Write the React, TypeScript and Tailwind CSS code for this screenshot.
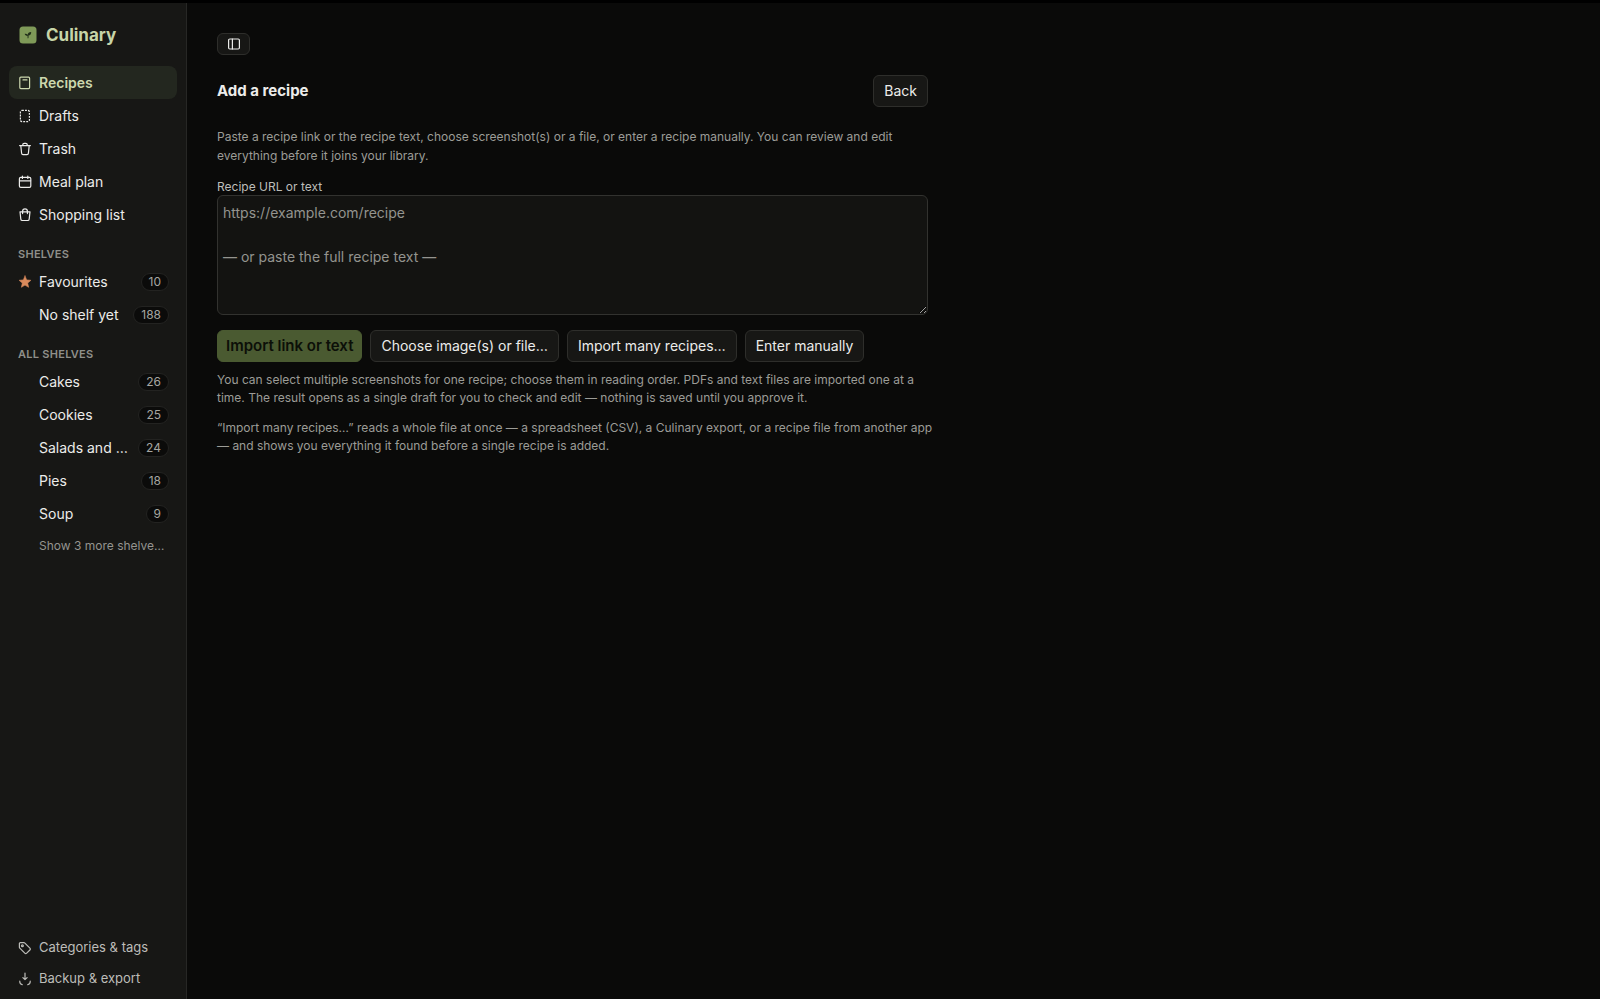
import React from 'react';
import { clsx } from 'clsx';

interface NavItem {
  label: string;
  icon?: React.ReactNode;
  count?: number;
  active?: boolean;
}

const Icon: React.FC<{ children: React.ReactNode; className?: string }> = ({ children, className }) => (
  <svg
    viewBox="0 0 16 16"
    className={clsx('size-4 shrink-0', className)}
    fill="none"
    stroke="currentColor"
    strokeWidth="1.2"
    strokeLinecap="round"
    strokeLinejoin="round"
    aria-hidden="true"
  >
    {children}
  </svg>
);

const libraryItems: NavItem[] = [
  {
    label: 'Recipes',
    active: true,
    icon: (
      <Icon>
        <rect x="2.8" y="2.2" width="9.8" height="11.4" rx="1" />
        <path d="M6 4.9h4" />
      </Icon>
    ),
  },
  {
    label: 'Drafts',
    icon: (
      <Icon>
        <rect x="3.4" y="2.4" width="9" height="11.2" rx="1.6" strokeDasharray="1.9 1.1" strokeLinecap="butt" />
      </Icon>
    ),
  },
  {
    label: 'Trash',
    icon: (
      <Icon>
        <path d="M2.6 4.6h10.8M5.8 4.4v-.8c0-.8.5-1.3 1.3-1.3h1.8c.8 0 1.3.5 1.3 1.3v.8M3.8 4.8l.8 7.5c.1.9.6 1.3 1.4 1.3h4c.8 0 1.3-.4 1.4-1.3l.8-7.5" />
      </Icon>
    ),
  },
  {
    label: 'Meal plan',
    icon: (
      <Icon>
        <rect x="2.4" y="3.4" width="11.4" height="10" rx="1.4" />
        <path d="M2.6 6.8h11M5.4 2v2.400M10.800 2v2.400" />
      </Icon>
    ),
  },
  {
    label: 'Shopping list',
    icon: (
      <Icon>
        <path d="M3 4.800h10l-.8 7.300c-.1.900-.7 1.400-1.500 1.400H5.300c-.8 0-1.400-.5-1.500-1.400L3 4.800ZM5.600 6.600V4.300C5.600 2.900 6.600 1.900 8 1.900s2.400 1 2.400 2.400v2.300" />
      </Icon>
    ),
  },
];

const shelfItems: NavItem[] = [
  {
    label: 'Favourites',
    count: 10,
    icon: (
      <Icon className="text-[#d98a5c]">
        <path
          fill="currentColor"
          strokeWidth=".6"
          d="m8 2 1.700 3.900 4.200.4-3.200 2.800.9 4.200L8 11.100l-3.600 2.200.9-4.200-3.200-2.800 4.200-.4L8 2Z"
        />
      </Icon>
    ),
  },
  { label: 'No shelf yet', count: 188 },
];

const allShelves: NavItem[] = [
  { label: 'Cakes', count: 26 },
  { label: 'Cookies', count: 25 },
  { label: 'Salads and …', count: 24 },
  { label: 'Pies', count: 18 },
  { label: 'Soup', count: 9 },
];

const NavList: React.FC<{ items: NavItem[] }> = ({ items }) => (
  <ul>
    {items.map((item) => (
      <li key={item.label}>
        <a
          href="#"
          aria-current={item.active ? 'page' : undefined}
          className={clsx(
            'flex h-[33px] items-center rounded-lg px-2 text-sm',
            item.active ? 'bg-[#23271f] font-semibold text-[#ccd8ae]' : 'text-[#ececea]',
          )}
        >
          <span className="mr-1.5 flex size-4 shrink-0">{item.icon}</span>
          <span className="flex-1 whitespace-nowrap">{item.label}</span>
          {item.count !== undefined && (
            <span className="rounded-full border border-[#232321] bg-[#0b0b0a] px-[7px] text-xs leading-4 text-[#a6a6a1]">
              {item.count}
            </span>
          )}
        </a>
      </li>
    ))}
  </ul>
);

const ShelfHeading: React.FC<{ children: React.ReactNode }> = ({ children }) => (
  <h2 className="px-[9px] pt-[15px] pb-[3px] text-[11px] leading-4 font-semibold tracking-wide text-[#8f8f8a] uppercase">
    {children}
  </h2>
);

const Sidebar = () => (
  <aside className="flex w-[187px] shrink-0 flex-col border-r border-[#272725] bg-[#171715] px-[9px] pb-[5px]">
    <div className="flex items-center gap-[9px] px-2.5 pt-[18px] pb-[17px]">
      <svg viewBox="0 0 18 18" className="size-[18px]" aria-hidden="true">
        <rect x=".5" y=".5" width="17" height="17" rx="3.5" fill="#7f9a58" />
        <path
          d="M8.500 12.300c.2-1 .2-1.800-.1-2.500C7 9.900 6 9.100 5.700 7.700c1.400-.2 2.400.2 3 1.100.1-1.500 1.200-2.500 3.500-2.700.1 2-.9 3.300-2.700 3.500.2.900.1 1.800-.1 2.700h-.9Z"
          fill="#22301a"
        />
      </svg>
      <span className="text-[17px] leading-7 font-bold text-[#c7d5a8]">Culinary</span>
    </div>

    <nav aria-label="Library">
      <NavList items={libraryItems} />
      <ShelfHeading>Shelves</ShelfHeading>
      <NavList items={shelfItems} />
      <ShelfHeading>All shelves</ShelfHeading>
      <NavList items={allShelves} />
      <button type="button" className="block h-8 pl-[30px] text-xs whitespace-nowrap text-[#94948f]">
        Show 3 more shelve…
      </button>
    </nav>

    <nav aria-label="Manage" className="mt-auto text-[13px] text-[#bdbdb9]">
      <a href="#" className="flex h-[31px] items-center gap-1.5 px-2">
        <Icon>
          <path d="M2.400 3.600v3.600c0 .4.100.7.400 1l5 5c.6.600 1.300.6 1.900 0l3.200-3.200c.6-.6.600-1.300 0-1.900l-5-5c-.3-.3-.6-.4-1-.4H3.300c-.5 0-.9.4-.9.900Z" />
          <circle cx="5.400" cy="5.700" r=".9" />
        </Icon>
        Categories &amp; tags
      </a>
      <a href="#" className="flex h-[31px] items-center gap-1.5 px-2">
        <Icon>
          <path d="M8 2v6.600M5.900 6.600 8 8.700l2.100-2.100M2.800 10.200v.5c0 1.700.8 2.600 2.400 2.900M13.200 10.200v.5c0 1.700-.8 2.600-2.400 2.900" />
        </Icon>
        Backup &amp; export
      </a>
    </nav>
  </aside>
);

interface ButtonProps {
  children: React.ReactNode;
  primary?: boolean;
}

const Button: React.FC<ButtonProps> = ({ children, primary }) => (
  <button
    type="button"
    disabled={primary}
    className={clsx(
      'h-8 rounded-md border whitespace-nowrap',
      primary
        ? 'border-[#4a5a31] bg-[#4a5a31] px-2 text-[15px] font-semibold text-[#0c0f08]'
        : 'border-[#2e2e2b] bg-[#171715] px-2.5 text-sm text-[#ececea]',
    )}
  >
    {children}
  </button>
);

export default function App() {
  return (
    <div className="flex min-h-screen border-t-3 border-black bg-[#0a0a09] font-['Inter','Liberation_Sans',sans-serif]">
      <Sidebar />
      <main className="min-w-0 flex-1 px-[30px] pt-[30px] text-[#ececea]">
        <div className="max-w-[711px]">
          <button
            type="button"
            aria-label="Toggle sidebar"
            className="flex h-[22px] w-[33px] items-center justify-center rounded-md border border-[#2e2e2b] bg-[#171715]"
          >
            <Icon>
              <rect x="2.600" y="3" width="10.800" height="10" rx="1.200" />
              <path d="M6.400 3v10" />
            </Icon>
          </button>

          <div className="mt-5 flex items-center justify-between">
            <h1 className="text-[15px] font-bold">Add a recipe</h1>
            <Button>Back</Button>
          </div>

          <p className="mt-5 text-xs leading-[19px] text-[#9c9c97]">
            Paste a recipe link or the recipe text, choose screenshot(s) or a file, or enter a recipe manually. You can
            review and edit everything before it joins your library.
          </p>

          <label htmlFor="recipe-source" className="mt-[14px] block text-xs leading-4 text-[#bdbdb9]">
            Recipe URL or text
          </label>
          <textarea
            id="recipe-source"
            rows={5}
            placeholder={'https://example.com/recipe\n\n— or paste the full recipe text —'}
            className="block h-[120px] w-full resize-y rounded-md border border-[#32322f] bg-[#131311] px-[5px] py-1.5 text-sm leading-[22px] placeholder:text-[#94948f]"
          />

          <div className="mt-[15px] flex flex-wrap gap-2">
            <Button primary>Import link or text</Button>
            <Button>Choose image(s) or file…</Button>
            <Button>Import many recipes…</Button>
            <Button>Enter manually</Button>
          </div>

          <div className="mt-[9px] -mr-2.5 space-y-3 text-xs leading-[18px] text-[#9c9c97]">
            <p>
              You can select multiple screenshots for one recipe; choose them in reading order. PDFs and text files are
              imported one at a time. The result opens as a single draft for you to check and edit — nothing is saved
              until you approve it.
            </p>
            <p>
              “Import many recipes…” reads a whole file at once — a spreadsheet (CSV), a Culinary export, or a recipe
              file from another app — and shows you everything it found before a single recipe is added.
            </p>
          </div>
        </div>
      </main>
    </div>
  );
}
